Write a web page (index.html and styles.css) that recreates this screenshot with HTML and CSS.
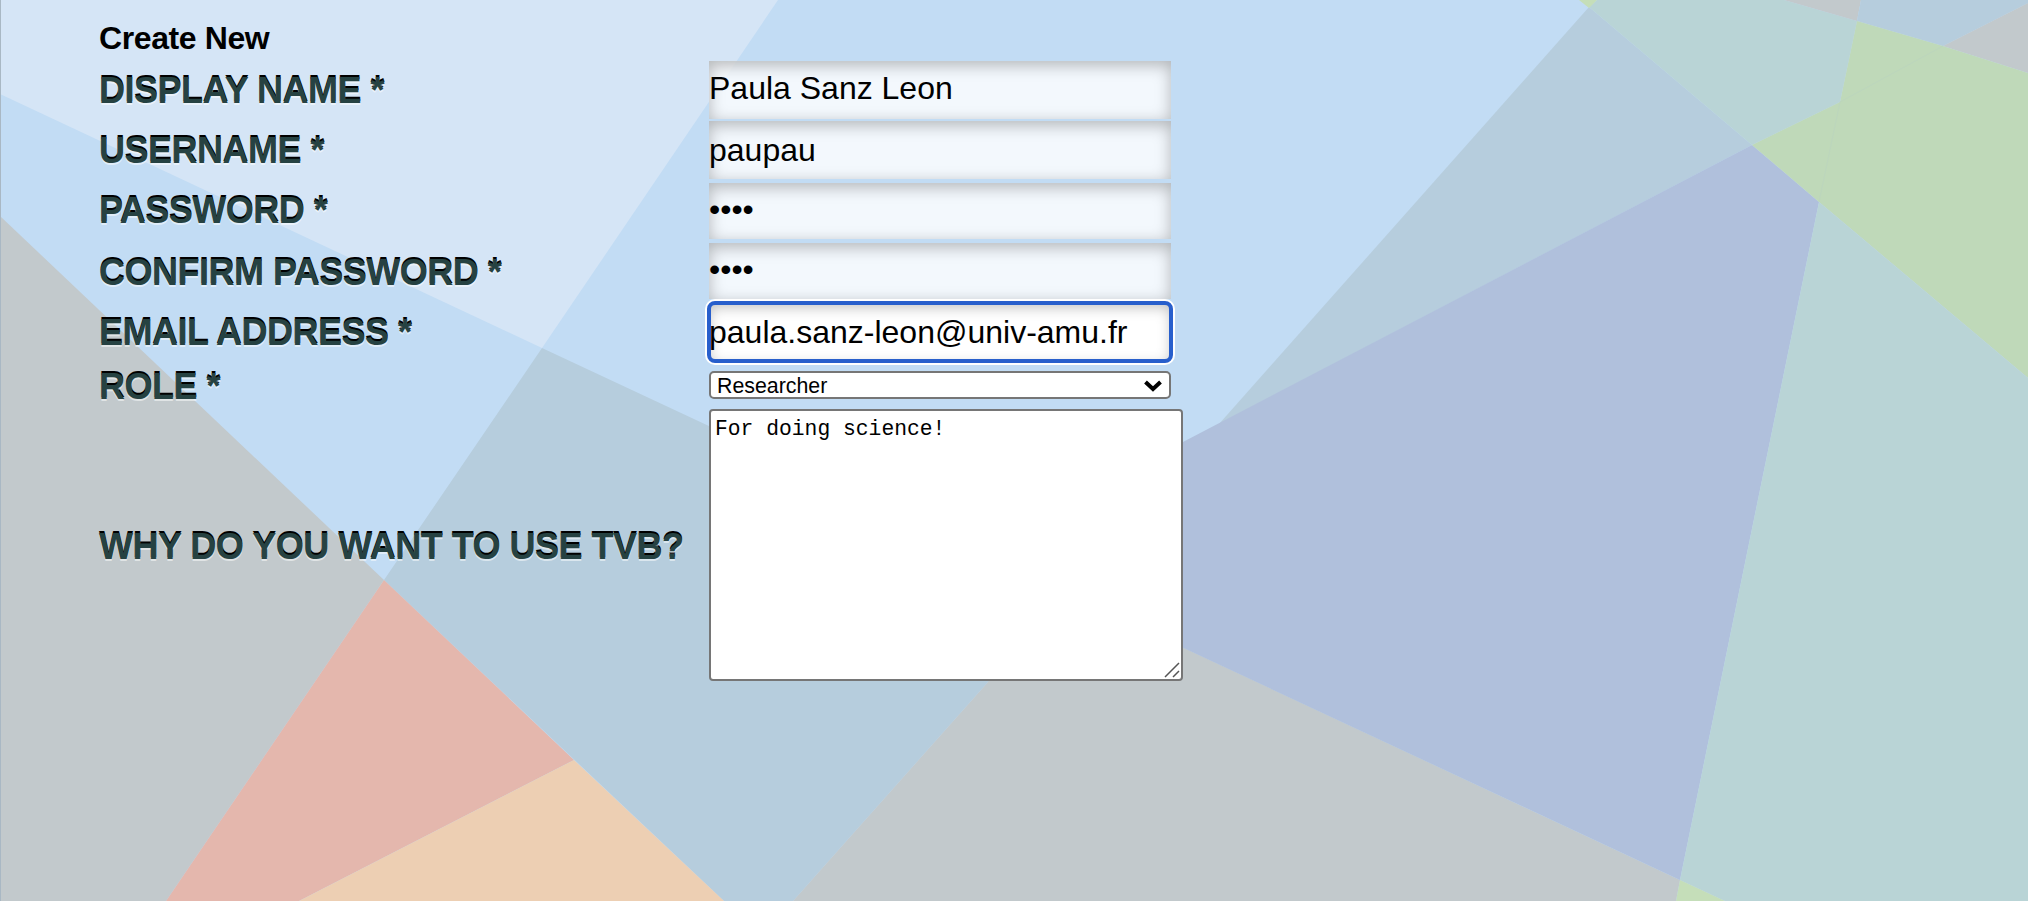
FILE: index.html
```html
<!DOCTYPE html>
<html lang="en">
<head>
<meta charset="utf-8">
<title>Create New</title>
<link rel="stylesheet" href="styles.css">
</head>
<body>
<svg class="backdrop" viewBox="0 0 2028 901" preserveAspectRatio="none" aria-hidden="true">
  <rect width="2028" height="901" fill="#c2dcf4"/>
  <polygon fill="#d5e5f6" points="0,0 778,0 542,348 0,94"/>
  <polygon fill="#c2c9cc" points="0,216 384,580 166,901 0,901"/>
  <polygon fill="#b6cddd" points="542,348 1182,647 1100,700 988,682 793,901 724,901 384,580"/>
  <polygon fill="#c2c9cc" points="988,682 1018,648 1182,647 1680,880 1676,901 793,901"/>
  <polygon fill="#e4b7ad" points="384,580 574,760 299,901 166,901"/>
  <polygon fill="#edcfb3" points="574,760 724,901 299,901"/>
  <polygon fill="#b6cddd" points="1589,7 1752,145 1219,424"/>
  <polygon fill="#b0c0dc" points="1752,145 1819,202 1680,880 1160,637 1160,454"/>
  <polygon fill="#b9d4d6" points="1597,0 1784,0 1857,21 1840,102 1752,145 1589,7"/>
  <polygon fill="#c5deb9" points="1579,0 1597,0 1589,8"/>
  <polygon fill="#c2c9cc" points="1784,0 1861,0 1857,21"/>
  <polygon fill="#b6cddd" points="1861,0 2028,0 2028,3 1943,46 1857,21"/>
  <polygon fill="#c2c9cc" points="2028,3 2028,73 1943,46"/>
  <polygon fill="#bfd9b9" points="1857,21 1943,46 2028,73 2028,378 1819,202 1752,145 1840,102"/>
  <path d="M1943 46L1840 102L1819 202" fill="none" stroke="#bcd6bd"/>
  <polygon fill="#b9d4d6" points="1819,202 2028,378 2028,901 1725,901 1680,880"/>
  <polygon fill="#c5deb9" points="1680,880 1725,901 1676,901"/>
  <rect width="1" height="901" fill="#a9b8c4"/>
</svg>
<main class="page">
  <h1 class="title">Create New</h1>
  <form class="form">
    <label class="label" for="name">DISPLAY NAME *</label>
    <input class="field field-raised" id="name" type="text" value="Paula Sanz Leon">
    <label class="label" for="user">USERNAME *</label>
    <input class="field" id="user" type="text" value="paupau">
    <label class="label label-tight" for="pass">PASSWORD *</label>
    <input class="field field-short" id="pass" type="password" value="1234">
    <label class="label" for="confirm">CONFIRM PASSWORD *</label>
    <input class="field field-short" id="confirm" type="password" value="1234">
    <label class="label" for="email">EMAIL ADDRESS *</label>
    <input class="field field-focused" id="email" type="text" value="paula.sanz-leon@univ-amu.fr">
    <label class="label label-role" for="role">ROLE *</label>
    <div class="select-wrap">
      <select class="select" id="role"><option>Researcher</option></select>
      <svg class="chevron" viewBox="0 0 18 12"><path d="M1.500 2L9 9L16.500 2" fill="none" stroke="#000" stroke-width="4"/></svg>
    </div>
    <label class="label label-why" for="why">WHY DO YOU WANT TO USE TVB?</label>
    <div class="area-wrap">
      <textarea class="area" id="why">For doing science!</textarea>
      <svg class="grip" viewBox="0 0 16 16"><path d="M1 15L15 1M9 15L15 9" fill="none" stroke="#555" stroke-width="1.500"/></svg>
    </div>
  </form>
</main>
</body>
</html>
```
FILE: styles.css
```css
* { box-sizing: border-box; }

body {
  margin: 0;
  height: 901px;
  overflow: hidden;
  font-family: "Liberation Sans", Arial, sans-serif;
  color: #000;
}

.backdrop {
  position: absolute;
  inset: 0;
  width: 2028px;
  height: 901px;
  z-index: -1;
}

.page { padding: 19px 0 0 99px; }

.title {
  margin: 0;
  height: 42px;
  font-size: 32px;
  line-height: 39px;
  letter-spacing: -0.4px;
  font-weight: bold;
}

.form {
  display: grid;
  grid-template-columns: 610px 474px;
  grid-template-rows: 60px 62px 60px 60px 68px 38px 272px;
  align-items: start;
}

.label {
  font-size: 36px;
  font-weight: bold;
  letter-spacing: -0.5px;
  line-height: 60px;
  white-space: nowrap;
  color: #264242;
  text-shadow: 0 2px 0 rgba(255, 255, 255, 0.5), 0 -2px 0 #000;
}

.label-tight { line-height: 56px; }
.label-role { line-height: 31px; }
.label-why { line-height: 276px; }

.field {
  width: 462px;
  height: 58px;
  margin: 0;
  padding: 0;
  border: 0;
  border-radius: 0;
  outline: none;
  background: rgba(255, 255, 255, 0.8);
  box-shadow: inset 0 4px 16px rgba(0, 0, 0, 0.28);
  font: 32px "Liberation Sans", Arial, sans-serif;
  color: #000;
}

.field-raised { padding-bottom: 4px; }

.field-short {
  height: 56px;
  padding-bottom: 4px;
}

.field-focused {
  position: relative;
  background: #fff;
  outline: 4px solid #285fcc;
  outline-offset: -2px;
  border-radius: 6px;
  box-shadow: 0 0 0 4px #fff, inset 0 4px 14px rgba(0, 0, 0, 0.26);
}

.select-wrap {
  position: relative;
  width: 462px;
  height: 28px;
}

.select {
  display: block;
  appearance: none;
  width: 462px;
  height: 28px;
  margin: 0;
  padding: 1px 6px 0;
  border: 2px solid #767676;
  border-radius: 5px;
  background: #fff;
  font: 21.33px/24px "Liberation Sans", Arial, sans-serif;
  color: #000;
}

.chevron {
  position: absolute;
  right: 9px;
  top: 9px;
  width: 18px;
  height: 12px;
}

.area-wrap {
  position: relative;
  width: 474px;
  height: 272px;
}

.area {
  display: block;
  width: 474px;
  height: 272px;
  margin: 0;
  padding: 5px 4px 4px;
  border: 2px solid #767676;
  border-radius: 4px;
  background: #fff;
  resize: none;
  outline: none;
  font: 21.33px/26px "Liberation Mono", "Courier New", monospace;
  color: #000;
}

.grip {
  position: absolute;
  right: 3px;
  bottom: 3px;
  width: 16px;
  height: 16px;
}
```
